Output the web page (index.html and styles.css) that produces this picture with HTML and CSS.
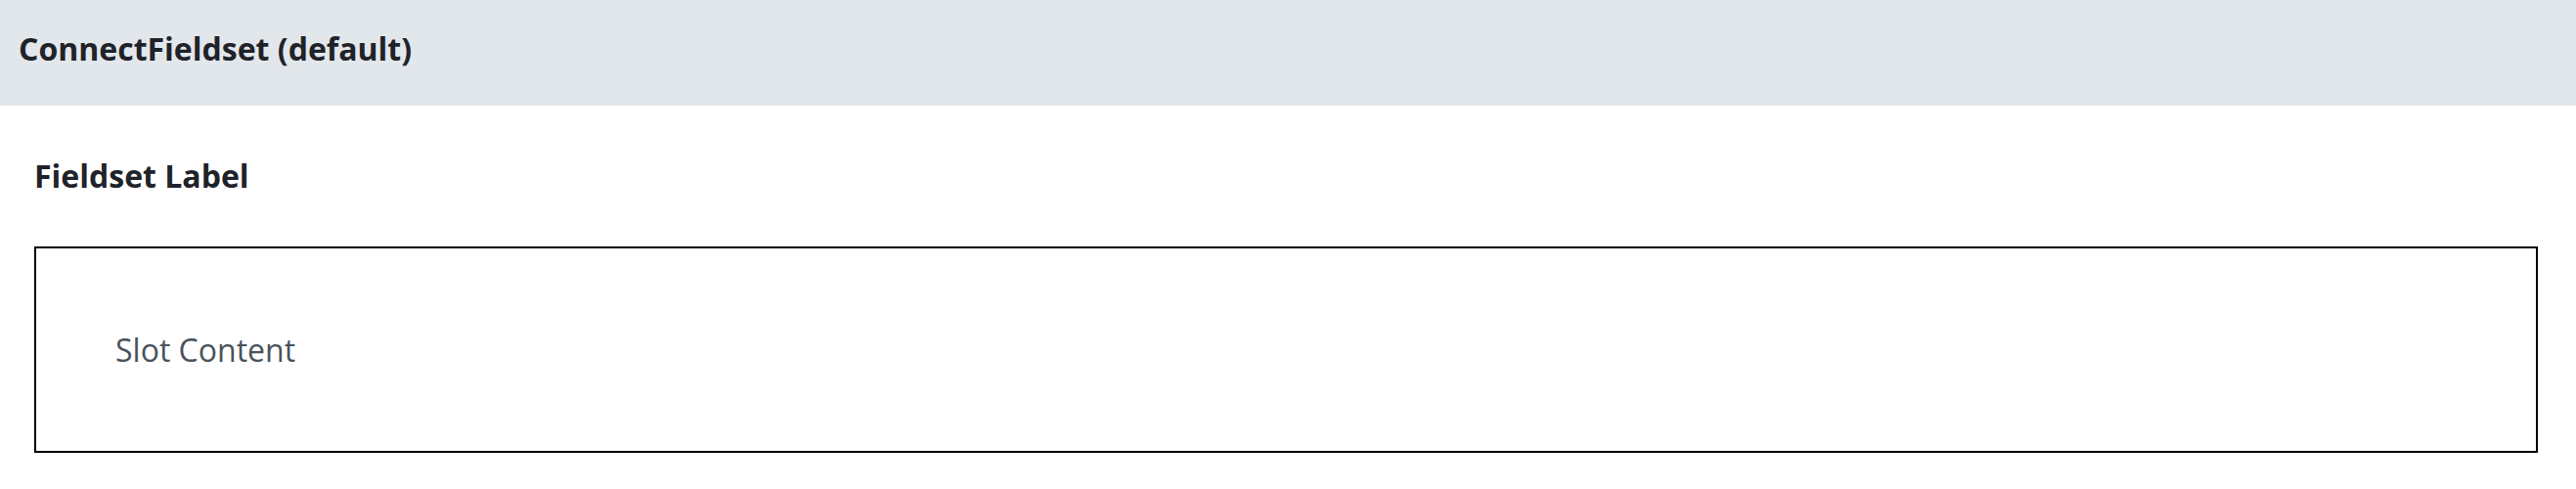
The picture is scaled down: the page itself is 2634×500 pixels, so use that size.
FILE: index.html
```html
<!DOCTYPE html>
<html lang="en">
<head>
<meta charset="utf-8">
<title>ConnectFieldset</title>
<link rel="stylesheet" href="styles.css">
</head>
<body>
  <header class="story-header">
    <h1 class="story-title">ConnectFieldset (default)</h1>
  </header>
  <main class="story-body">
    <fieldset class="fieldset">
      <legend class="fieldset-label">Fieldset Label</legend>
      <div class="slot-box">
        <span class="slot-text">Slot Content</span>
      </div>
    </fieldset>
  </main>
</body>
</html>
```

FILE: styles.css
```css
* {
  box-sizing: border-box;
}

html, body {
  margin: 0;
  padding: 0;
  background: #ffffff;
}

body {
  font-family: "Open Sans", "Noto Sans", sans-serif;
  color: #1f2329;
}

.story-header {
  height: 108px;
  background: #e2e7eb;
  padding: 28px 20px 0 19px;
}

.story-title {
  margin: 0;
  font-size: 32px;
  font-weight: 700;
  line-height: normal;
  color: #1f2329;
}

.story-body {
  padding: 50px 39px 0 35px;
}

.fieldset {
  margin: 0;
  padding: 0;
  border: 0;
  min-width: 0;
  display: flex;
  flex-direction: column;
  gap: 51px;
}

.fieldset-label {
  padding: 0;
  float: left;
  font-size: 32px;
  font-weight: 700;
  line-height: normal;
  color: #1f2329;
}

.slot-box {
  border: 2px solid #000000;
  padding: 82px 80px 82px 81px;
}

.slot-text {
  display: block;
  font-size: 32px;
  font-weight: 400;
  line-height: normal;
  color: #4a525b;
}
```
